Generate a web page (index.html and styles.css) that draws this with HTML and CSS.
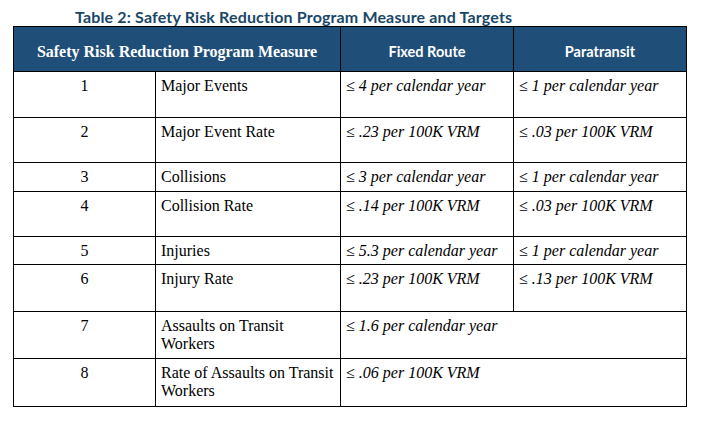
FILE: index.html
```html
<!DOCTYPE html>
<html>
<head>
<meta charset="utf-8">
<link rel="stylesheet" href="styles.css">
</head>
<body>
<div class="page">
  <h1 class="title">Table 2: Safety Risk Reduction Program Measure and Targets</h1>
  <table class="tbl">
    <colgroup>
      <col class="c1"><col class="c2"><col class="c3"><col class="c4">
    </colgroup>
    <thead>
      <tr class="head">
        <th colspan="2" class="th-serif">Safety Risk Reduction Program Measure</th>
        <th class="th-sans">Fixed Route</th>
        <th class="th-sans">Paratransit</th>
      </tr>
    </thead>
    <tbody>
      <tr class="tall"><td class="num">1</td><td>Major Events</td><td class="tgt">≤ 4 per calendar year</td><td class="tgt">≤ 1 per calendar year</td></tr>
      <tr class="mid"><td class="num">2</td><td>Major Event Rate</td><td class="tgt">≤ .23 per 100K VRM</td><td class="tgt">≤ .03 per 100K VRM</td></tr>
      <tr class="short"><td class="num">3</td><td>Collisions</td><td class="tgt">≤ 3 per calendar year</td><td class="tgt">≤ 1 per calendar year</td></tr>
      <tr class="mid"><td class="num">4</td><td>Collision Rate</td><td class="tgt">≤ .14 per 100K VRM</td><td class="tgt">≤ .03 per 100K VRM</td></tr>
      <tr class="short2"><td class="num">5</td><td>Injuries</td><td class="tgt">≤ 5.3 per calendar year</td><td class="tgt">≤ 1 per calendar year</td></tr>
      <tr class="taller"><td class="num">6</td><td>Injury Rate</td><td class="tgt">≤ .23 per 100K VRM</td><td class="tgt">≤ .13 per 100K VRM</td></tr>
      <tr class="two"><td class="num">7</td><td>Assaults on Transit Workers</td><td class="tgt" colspan="2">≤ 1.6 per calendar year</td></tr>
      <tr class="two2"><td class="num">8</td><td>Rate of Assaults on Transit Workers</td><td class="tgt" colspan="2">≤ .06 per 100K VRM</td></tr>
    </tbody>
  </table>
</div>
</body>
</html>
```
FILE: styles.css
```css
html, body {
  margin: 0;
  padding: 0;
  background: #ffffff;
}
.page {
  padding: 7px 0 0 13px;
}
.title {
  margin: 0 0 0 62px;
  font-family: Lato, "Open Sans", sans-serif;
  font-weight: 700;
  font-size: 16px;
  line-height: 19px;
  color: #1a4768;
  letter-spacing: 0.15px;
}
.tbl {
  border-collapse: collapse;
  table-layout: fixed;
  width: 673px;
  font-family: "Liberation Serif", "Times New Roman", serif;
  font-size: 16px;
  line-height: 18px;
  color: #000;
}
.c1 { width: 142px; }
.c2 { width: 185px; }
.c3 { width: 173px; }
.c4 { width: 173px; }
.tbl th, .tbl td {
  border: 1px solid #000;
  padding: 5px 5px 0 5px;
  vertical-align: top;
  text-align: left;
}
.head th {
  background: #1f4e79;
  color: #fff;
  height: 38px;
  vertical-align: middle;
  text-align: center;
  padding: 6px 4px 0 4px;
}
.th-serif {
  font-family: "Liberation Serif", "Times New Roman", serif;
  font-weight: 700;
  font-size: 16px;
}
.th-sans {
  font-family: Lato, "Open Sans", sans-serif;
  font-weight: 700;
  font-size: 14.5px;
}
.tbl td.num {
  text-align: center;
}
.tgt {
  font-style: italic;
}
.tall td { height: 40px; }
.taller td { height: 41px; }
.mid td { height: 39px; }
.short td { height: 23px; }
.short2 td { height: 22px; }
.two td { height: 41px; }
.two2 td { height: 42px; }
```
